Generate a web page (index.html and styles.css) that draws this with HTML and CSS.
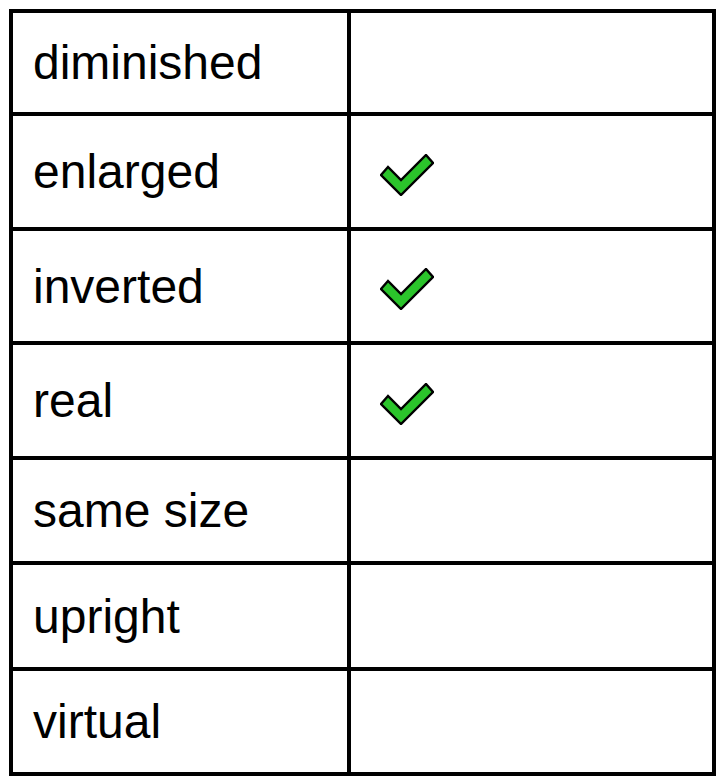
FILE: index.html
```html
<!DOCTYPE html>
<html>
<head>
<meta charset="utf-8">
<link rel="stylesheet" href="styles.css">
</head>
<body>
<div class="table">
  <div class="cell label r1">diminished</div><div class="cell r1"></div>
  <div class="cell label r2">enlarged</div><div class="cell mark r2"><svg class="check" viewBox="0 0 54 42" width="54" height="42"><polygon points="1,21 8,13 21,26 46,1 53,9 21,41"/></svg></div>
  <div class="cell label r3">inverted</div><div class="cell mark r3"><svg class="check" viewBox="0 0 54 42" width="54" height="42"><polygon points="1,21 8,13 21,26 46,1 53,9 21,41"/></svg></div>
  <div class="cell label r4">real</div><div class="cell mark r4"><svg class="check" viewBox="0 0 54 42" width="54" height="42"><polygon points="1,21 8,13 21,26 46,1 53,9 21,41"/></svg></div>
  <div class="cell label r5">same size</div><div class="cell r5"></div>
  <div class="cell label r6">upright</div><div class="cell r6"></div>
  <div class="cell label r7">virtual</div><div class="cell r7"></div>
</div>
</body>
</html>
```
FILE: styles.css
```css
html, body {
  margin: 0;
  padding: 0;
  background: #ffffff;
}
body {
  padding: 9px 0 0 9px;
}
.table {
  display: grid;
  grid-template-columns: 334px 361px;
  grid-template-rows: 99px 111px 110px 111px 101px 102px 101px;
  gap: 4px;
  padding: 4px;
  background: #000000;
  width: max-content;
}
.cell {
  background: #ffffff;
  display: flex;
  align-items: center;
}
.label {
  font-family: "Liberation Sans", Arial, sans-serif;
  font-size: 48px;
  color: #000000;
  padding-left: 20px;
}
.mark {
  padding-left: 29px;
  padding-top: 6px;
}
.check polygon {
  fill: #2bc42b;
  stroke: #000000;
  stroke-width: 2.4;
  stroke-linejoin: miter;
}
```
